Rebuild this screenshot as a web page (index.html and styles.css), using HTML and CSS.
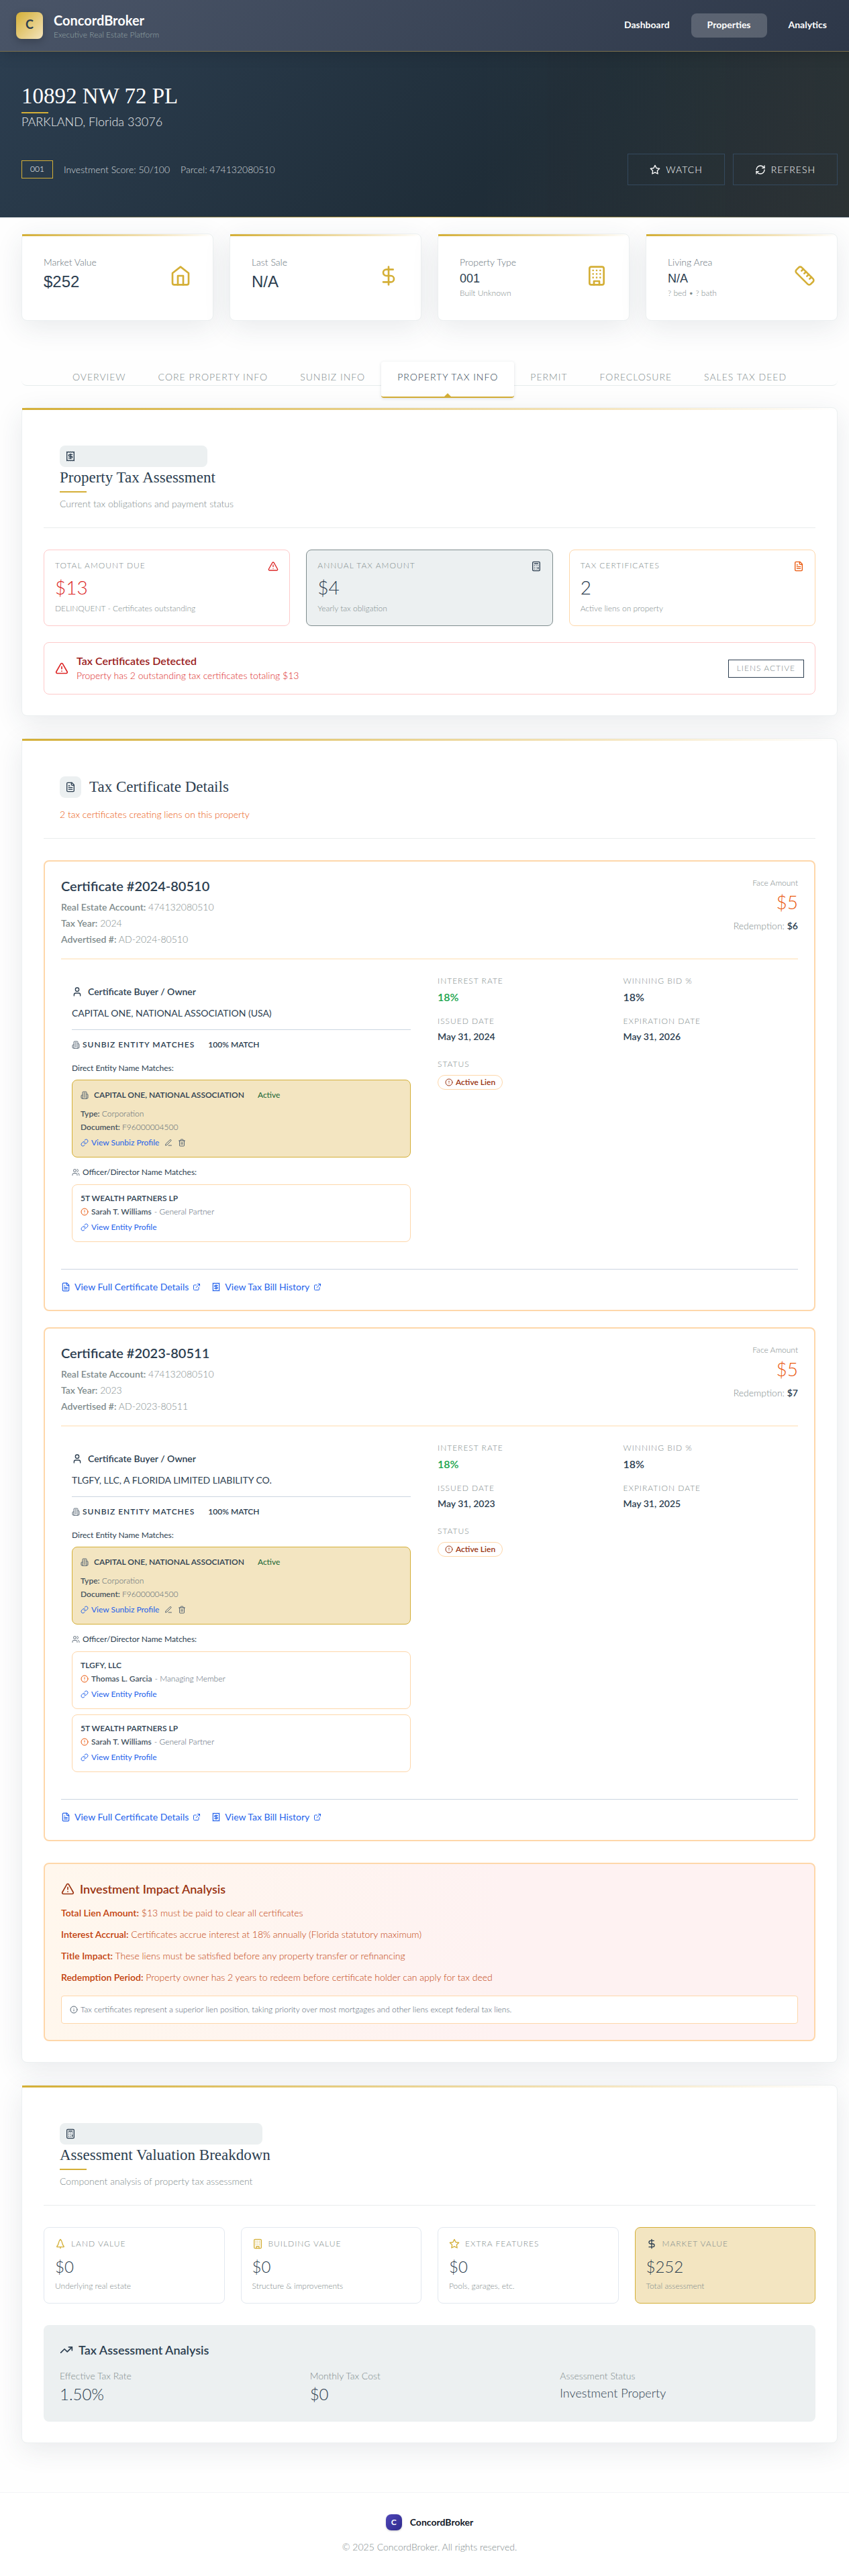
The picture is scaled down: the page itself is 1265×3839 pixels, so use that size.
FILE: index.html
```html
<!DOCTYPE html>
<html lang="en">
<head>
<meta charset="utf-8">
<meta name="viewport" content="width=device-width, initial-scale=1">
<title>10892 NW 72 PL - ConcordBroker</title>
<link rel="stylesheet" href="styles.css">
</head>
<body>
<svg class="sprite" aria-hidden="true">
  <symbol id="home" viewBox="0 0 24 24"><path d="m3 9 9-7 9 7v11a2 2 0 0 1-2 2H5a2 2 0 0 1-2-2z"/><path d="M9 22V12h6v10"/></symbol>
  <symbol id="dollar" viewBox="0 0 24 24"><path d="M12 2v20"/><path d="M17 5H9.5a3.5 3.5 0 0 0 0 7h5a3.5 3.5 0 0 1 0 7H6"/></symbol>
  <symbol id="building" viewBox="0 0 24 24"><rect x="4" y="2" width="16" height="20" rx="2"/><path d="M9 22v-4h6v4M8 6h.01M16 6h.01M12 6h.01M12 10h.01M12 14h.01M16 10h.01M16 14h.01M8 10h.01M8 14h.01"/></symbol>
  <symbol id="ruler" viewBox="0 0 24 24"><path d="M21.3 15.3a2.4 2.4 0 0 1 0 3.4l-2.6 2.6a2.4 2.4 0 0 1-3.4 0L2.7 8.7a2.41 2.41 0 0 1 0-3.4l2.6-2.6a2.41 2.41 0 0 1 3.4 0Z"/><path d="m14.5 12.5 2-2M11.5 9.5l2-2M8.5 6.5l2-2M17.5 15.5l2-2"/></symbol>
  <symbol id="star" viewBox="0 0 24 24"><path d="m12 2 3.09 6.26L22 9.27l-5 4.87 1.18 6.88L12 17.77l-6.18 3.25L7 14.14 2 9.27l6.91-1.01z"/></symbol>
  <symbol id="refresh" viewBox="0 0 24 24"><path d="M3 12a9 9 0 0 1 9-9 9.75 9.75 0 0 1 6.74 2.74L21 8"/><path d="M21 3v5h-5M21 12a9 9 0 0 1-9 9 9.75 9.75 0 0 1-6.74-2.74L3 16"/><path d="M8 16H3v5"/></symbol>
  <symbol id="receipt" viewBox="0 0 24 24"><path d="M4 2v20l2-1 2 1 2-1 2 1 2-1 2 1 2-1 2 1V2l-2 1-2-1-2 1-2-1-2 1-2-1-2 1Z"/><path d="M16 8h-6a2 2 0 1 0 0 4h4a2 2 0 1 1 0 4H8M12 17.5v-11"/></symbol>
  <symbol id="calc" viewBox="0 0 24 24"><rect x="4" y="2" width="16" height="20" rx="2"/><path d="M8 6h8M16 14v4M16 10h.01M12 10h.01M8 10h.01M12 14h.01M8 14h.01M12 18h.01M8 18h.01"/></symbol>
  <symbol id="file" viewBox="0 0 24 24"><path d="M15 2H6a2 2 0 0 0-2 2v16a2 2 0 0 0 2 2h12a2 2 0 0 0 2-2V7Z"/><path d="M14 2v4a2 2 0 0 0 2 2h4M10 9H8M16 13H8M16 17H8"/></symbol>
  <symbol id="warn" viewBox="0 0 24 24"><path d="m21.73 18-8-14a2 2 0 0 0-3.48 0l-8 14A2 2 0 0 0 4 21h16a2 2 0 0 0 1.73-3Z"/><path d="M12 9v4M12 17h.01"/></symbol>
  <symbol id="user" viewBox="0 0 24 24"><path d="M19 21v-2a4 4 0 0 0-4-4H9a4 4 0 0 0-4 4v2"/><circle cx="12" cy="7" r="4"/></symbol>
  <symbol id="users" viewBox="0 0 24 24"><path d="M16 21v-2a4 4 0 0 0-4-4H6a4 4 0 0 0-4 4v2"/><circle cx="9" cy="7" r="4"/><path d="M22 21v-2a4 4 0 0 0-3-3.87M16 3.13a4 4 0 0 1 0 7.75"/></symbol>
  <symbol id="office" viewBox="0 0 24 24"><path d="M6 22V4a2 2 0 0 1 2-2h8a2 2 0 0 1 2 2v18Z"/><path d="M6 12H4a2 2 0 0 0-2 2v6a2 2 0 0 0 2 2h2M18 9h2a2 2 0 0 1 2 2v9a2 2 0 0 1-2 2h-2M10 6h4M10 10h4M10 14h4M10 18h4"/></symbol>
  <symbol id="link" viewBox="0 0 24 24"><path d="M10 13a5 5 0 0 0 7.54.54l3-3a5 5 0 0 0-7.07-7.07l-1.72 1.71"/><path d="M14 11a5 5 0 0 0-7.54-.54l-3 3a5 5 0 0 0 7.07 7.07l1.71-1.71"/></symbol>
  <symbol id="pen" viewBox="0 0 24 24"><path d="M12 20h9M16.5 3.5a2.12 2.12 0 0 1 3 3L7 19l-4 1 1-4Z"/></symbol>
  <symbol id="trash" viewBox="0 0 24 24"><path d="M3 6h18M19 6v14a2 2 0 0 1-2 2H7a2 2 0 0 1-2-2V6M8 6V4a2 2 0 0 1 2-2h4a2 2 0 0 1 2 2v2M10 11v6M14 11v6"/></symbol>
  <symbol id="alert" viewBox="0 0 24 24"><circle cx="12" cy="12" r="10"/><path d="M12 8v4M12 16h.01"/></symbol>
  <symbol id="info" viewBox="0 0 24 24"><circle cx="12" cy="12" r="10"/><path d="M12 16v-4M12 8h.01"/></symbol>
  <symbol id="external" viewBox="0 0 24 24"><path d="M15 3h6v6M10 14 21 3M18 13v6a2 2 0 0 1-2 2H5a2 2 0 0 1-2-2V8a2 2 0 0 1 2-2h6"/></symbol>
  <symbol id="tree" viewBox="0 0 24 24"><path d="M12 2C9.5 4.500 8.500 7 8 10c-.5 3-1.500 5-3.500 7.200a1 1 0 0 0 .7 1.800h13.600a1 1 0 0 0 .7-1.800C17.500 15 16.500 13 16 10c-.5-3-1.500-5.500-4-8Z"/><path d="M12 22v-3"/></symbol>
  <symbol id="trend" viewBox="0 0 24 24"><path d="m22 7-8.5 8.5-5-5L2 17"/><path d="M16 7h6v6"/></symbol>
</svg>

<header class="topbar">
  <div class="brand">
    <span class="logo">C</span>
    <div>
      <div class="brand-name">ConcordBroker</div>
      <div class="brand-sub">Executive Real Estate Platform</div>
    </div>
  </div>
  <nav class="mainnav">
    <a href="#">Dashboard</a>
    <a href="#" class="current">Properties</a>
    <a href="#">Analytics</a>
  </nav>
</header>

<section class="hero">
  <h1>10892 NW 72 PL</h1>
  <p class="place">PARKLAND, Florida 33076</p>
  <div class="hero-row">
    <div class="hero-meta">
      <span class="tag tag-gold">001</span>
      <span>Investment Score: 50/100</span>
      <span>Parcel: 474132080510</span>
    </div>
    <div class="hero-actions">
      <button type="button"><svg class="i16"><use href="#star"/></svg>WATCH</button>
      <button type="button"><svg class="i16"><use href="#refresh"/></svg>REFRESH</button>
    </div>
  </div>
</section>

<main>
  <section class="facts">
    <article class="card fact">
      <div><p class="fact-label">Market Value</p><p class="fact-big">$252</p></div>
      <svg class="i32"><use href="#home"/></svg>
    </article>
    <article class="card fact">
      <div><p class="fact-label">Last Sale</p><p class="fact-big">N/A</p></div>
      <svg class="i32"><use href="#dollar"/></svg>
    </article>
    <article class="card fact">
      <div><p class="fact-label">Property Type</p><p class="fact-mid">001</p><p class="fact-note">Built Unknown</p></div>
      <svg class="i32"><use href="#building"/></svg>
    </article>
    <article class="card fact">
      <div><p class="fact-label">Living Area</p><p class="fact-mid">N/A</p><p class="fact-note">? bed • ? bath</p></div>
      <svg class="i32"><use href="#ruler"/></svg>
    </article>
  </section>

  <div class="tabs" role="tablist">
    <button type="button" role="tab">OVERVIEW</button>
    <button type="button" role="tab">CORE PROPERTY INFO</button>
    <button type="button" role="tab">SUNBIZ INFO</button>
    <button type="button" role="tab" aria-selected="true">PROPERTY TAX INFO</button>
    <button type="button" role="tab">PERMIT</button>
    <button type="button" role="tab">FORECLOSURE</button>
    <button type="button" role="tab">SALES TAX DEED</button>
  </div>

  <section class="card panel">
    <header class="panel-head">
      <h2 class="stacked"><span class="chip"><svg class="i16"><use href="#receipt"/></svg></span>Property Tax Assessment</h2>
      <p>Current tax obligations and payment status</p>
    </header>
    <div class="thirds">
      <article class="stat red">
        <div class="stat-top"><span>TOTAL AMOUNT DUE</span><svg class="i16"><use href="#warn"/></svg></div>
        <p class="stat-value">$13</p>
        <p class="stat-note">DELINQUENT - Certificates outstanding</p>
      </article>
      <article class="stat grey">
        <div class="stat-top"><span>ANNUAL TAX AMOUNT</span><svg class="i16"><use href="#calc"/></svg></div>
        <p class="stat-value">$4</p>
        <p class="stat-note">Yearly tax obligation</p>
      </article>
      <article class="stat orange">
        <div class="stat-top"><span>TAX CERTIFICATES</span><svg class="i16"><use href="#file"/></svg></div>
        <p class="stat-value">2</p>
        <p class="stat-note">Active liens on property</p>
      </article>
    </div>
    <div class="alert">
      <svg class="i20"><use href="#warn"/></svg>
      <div class="alert-text">
        <h3>Tax Certificates Detected</h3>
        <p>Property has 2 outstanding tax certificates totaling $13</p>
      </div>
      <span class="tag tag-navy">LIENS ACTIVE</span>
    </div>
  </section>

  <section class="card panel">
    <header class="panel-head warm">
      <h2 class="inline"><span class="chip"><svg class="i16"><use href="#file"/></svg></span>Tax Certificate Details</h2>
      <p>2 tax certificates creating liens on this property</p>
    </header>

    <div class="certs">
      <article class="cert">
        <div class="cert-head">
          <div>
            <h3>Certificate #2024-80510</h3>
            <p><strong>Real Estate Account:</strong> 474132080510</p>
            <p><strong>Tax Year:</strong> 2024</p>
            <p><strong>Advertised #:</strong> AD-2024-80510</p>
          </div>
          <div class="face">
            <p class="face-label">Face Amount</p>
            <p class="face-value">$5</p>
            <p class="face-redeem">Redemption: <strong>$6</strong></p>
          </div>
        </div>
        <div class="cert-body">
          <div class="buyer">
            <h4><svg class="i16"><use href="#user"/></svg>Certificate Buyer / Owner</h4>
            <p class="buyer-name">CAPITAL ONE, NATIONAL ASSOCIATION (USA)</p>
            <div class="match-head"><svg class="i12"><use href="#office"/></svg><span>SUNBIZ ENTITY MATCHES</span><span class="pct">100% MATCH</span></div>
            <p class="match-label">Direct Entity Name Matches:</p>
            <div class="entity gold">
              <div class="entity-name"><svg class="i12"><use href="#office"/></svg><strong>CAPITAL ONE, NATIONAL ASSOCIATION</strong><span class="active">Active</span></div>
              <p><strong>Type:</strong> Corporation</p>
              <p><strong>Document:</strong> F96000004500</p>
              <div class="entity-links"><a href="#"><svg class="i12"><use href="#link"/></svg>View Sunbiz Profile</a><button type="button" aria-label="Edit"><svg class="i12"><use href="#pen"/></svg></button><button type="button" aria-label="Delete"><svg class="i12"><use href="#trash"/></svg></button></div>
            </div>
            <p class="officer-label"><svg class="i12"><use href="#users"/></svg>Officer/Director Name Matches:</p>
            <div class="officers">
              <div class="entity">
                <p class="officer-entity">5T WEALTH PARTNERS LP</p>
                <p class="officer"><svg class="i12"><use href="#alert"/></svg><strong>Sarah T. Williams</strong> - General Partner</p>
                <div class="entity-links"><a href="#"><svg class="i12"><use href="#link"/></svg>View Entity Profile</a></div>
              </div>
            </div>
          </div>
          <dl class="terms">
            <div><dt>INTEREST RATE</dt><dd class="rate good">18%</dd></div>
            <div><dt>WINNING BID %</dt><dd class="rate">18%</dd></div>
            <div><dt>ISSUED DATE</dt><dd>May 31, 2024</dd></div>
            <div><dt>EXPIRATION DATE</dt><dd>May 31, 2026</dd></div>
            <div class="status"><dt>STATUS</dt><dd><span class="pill"><svg class="i12"><use href="#alert"/></svg>Active Lien</span></dd></div>
          </dl>
        </div>
        <div class="cert-foot">
          <a href="#"><svg class="i14"><use href="#file"/></svg>View Full Certificate Details<svg class="i12"><use href="#external"/></svg></a>
          <a href="#"><svg class="i14"><use href="#receipt"/></svg>View Tax Bill History<svg class="i12"><use href="#external"/></svg></a>
        </div>
      </article>

      <article class="cert">
        <div class="cert-head">
          <div>
            <h3>Certificate #2023-80511</h3>
            <p><strong>Real Estate Account:</strong> 474132080510</p>
            <p><strong>Tax Year:</strong> 2023</p>
            <p><strong>Advertised #:</strong> AD-2023-80511</p>
          </div>
          <div class="face">
            <p class="face-label">Face Amount</p>
            <p class="face-value">$5</p>
            <p class="face-redeem">Redemption: <strong>$7</strong></p>
          </div>
        </div>
        <div class="cert-body">
          <div class="buyer">
            <h4><svg class="i16"><use href="#user"/></svg>Certificate Buyer / Owner</h4>
            <p class="buyer-name">TLGFY, LLC, A FLORIDA LIMITED LIABILITY CO.</p>
            <div class="match-head"><svg class="i12"><use href="#office"/></svg><span>SUNBIZ ENTITY MATCHES</span><span class="pct">100% MATCH</span></div>
            <p class="match-label">Direct Entity Name Matches:</p>
            <div class="entity gold">
              <div class="entity-name"><svg class="i12"><use href="#office"/></svg><strong>CAPITAL ONE, NATIONAL ASSOCIATION</strong><span class="active">Active</span></div>
              <p><strong>Type:</strong> Corporation</p>
              <p><strong>Document:</strong> F96000004500</p>
              <div class="entity-links"><a href="#"><svg class="i12"><use href="#link"/></svg>View Sunbiz Profile</a><button type="button" aria-label="Edit"><svg class="i12"><use href="#pen"/></svg></button><button type="button" aria-label="Delete"><svg class="i12"><use href="#trash"/></svg></button></div>
            </div>
            <p class="officer-label"><svg class="i12"><use href="#users"/></svg>Officer/Director Name Matches:</p>
            <div class="officers">
              <div class="entity">
                <p class="officer-entity">TLGFY, LLC</p>
                <p class="officer"><svg class="i12"><use href="#alert"/></svg><strong>Thomas L. Garcia</strong> - Managing Member</p>
                <div class="entity-links"><a href="#"><svg class="i12"><use href="#link"/></svg>View Entity Profile</a></div>
              </div>
              <div class="entity">
                <p class="officer-entity">5T WEALTH PARTNERS LP</p>
                <p class="officer"><svg class="i12"><use href="#alert"/></svg><strong>Sarah T. Williams</strong> - General Partner</p>
                <div class="entity-links"><a href="#"><svg class="i12"><use href="#link"/></svg>View Entity Profile</a></div>
              </div>
            </div>
          </div>
          <dl class="terms">
            <div><dt>INTEREST RATE</dt><dd class="rate good">18%</dd></div>
            <div><dt>WINNING BID %</dt><dd class="rate">18%</dd></div>
            <div><dt>ISSUED DATE</dt><dd>May 31, 2023</dd></div>
            <div><dt>EXPIRATION DATE</dt><dd>May 31, 2025</dd></div>
            <div class="status"><dt>STATUS</dt><dd><span class="pill"><svg class="i12"><use href="#alert"/></svg>Active Lien</span></dd></div>
          </dl>
        </div>
        <div class="cert-foot">
          <a href="#"><svg class="i14"><use href="#file"/></svg>View Full Certificate Details<svg class="i12"><use href="#external"/></svg></a>
          <a href="#"><svg class="i14"><use href="#receipt"/></svg>View Tax Bill History<svg class="i12"><use href="#external"/></svg></a>
        </div>
      </article>
    </div>

    <div class="impact">
      <h3><svg class="i20"><use href="#warn"/></svg>Investment Impact Analysis</h3>
      <p><strong>Total Lien Amount:</strong> $13 must be paid to clear all certificates</p>
      <p><strong>Interest Accrual:</strong> Certificates accrue interest at 18% annually (Florida statutory maximum)</p>
      <p><strong>Title Impact:</strong> These liens must be satisfied before any property transfer or refinancing</p>
      <p><strong>Redemption Period:</strong> Property owner has 2 years to redeem before certificate holder can apply for tax deed</p>
      <div class="impact-note"><svg class="i12"><use href="#info"/></svg>Tax certificates represent a superior lien position, taking priority over most mortgages and other liens except federal tax liens.</div>
    </div>
  </section>

  <section class="card panel">
    <header class="panel-head">
      <h2 class="stacked"><span class="chip"><svg class="i16"><use href="#calc"/></svg></span>Assessment Valuation Breakdown</h2>
      <p>Component analysis of property tax assessment</p>
    </header>
    <div class="quarters">
      <article class="stat value">
        <div class="value-top"><svg class="i16"><use href="#tree"/></svg>LAND VALUE</div>
        <p class="value-num">$0</p>
        <p class="stat-note">Underlying real estate</p>
      </article>
      <article class="stat value">
        <div class="value-top"><svg class="i16"><use href="#building"/></svg>BUILDING VALUE</div>
        <p class="value-num">$0</p>
        <p class="stat-note">Structure &amp; improvements</p>
      </article>
      <article class="stat value">
        <div class="value-top"><svg class="i16"><use href="#star"/></svg>EXTRA FEATURES</div>
        <p class="value-num">$0</p>
        <p class="stat-note">Pools, garages, etc.</p>
      </article>
      <article class="stat value total">
        <div class="value-top"><svg class="i16"><use href="#dollar"/></svg>MARKET VALUE</div>
        <p class="value-num">$252</p>
        <p class="stat-note">Total assessment</p>
      </article>
    </div>
    <div class="analysis">
      <h3><svg class="i20"><use href="#trend"/></svg>Tax Assessment Analysis</h3>
      <dl>
        <div><dt>Effective Tax Rate</dt><dd>1.50%</dd></div>
        <div><dt>Monthly Tax Cost</dt><dd>$0</dd></div>
        <div><dt>Assessment Status</dt><dd class="word">Investment Property</dd></div>
      </dl>
    </div>
  </section>
</main>

<footer class="foot">
  <div class="foot-brand"><span class="foot-logo">C</span>ConcordBroker</div>
  <p>© 2025 ConcordBroker. All rights reserved.</p>
</footer>
</body>
</html>
```
FILE: styles.css
```css
:root {
  --navy: #2c3e50;
  --gold: #d4af37;
  --gold-soft: #f3e5c1;
  --grey: #7f8c8d;
  --mist: #ecf0f1;
  --peach: #fed7aa;
  --blue: #2563eb;
  --serif: "Liberation Serif", "Times New Roman", serif;
  --sans: Lato, "Open Sans", sans-serif;
}

* { box-sizing: border-box; }

html { overflow-x: hidden; }

body {
  margin: 0 -15px 0 0;
  background: #fefefe;
  color: var(--navy);
  font: 300 14px/22px var(--sans);
}

h1, h2, h3, h4, p, dl, dd { margin: 0; }
strong { font-weight: 600; }
a { color: inherit; text-decoration: none; }
button { font: inherit; color: inherit; background: none; border: 0; padding: 0; cursor: pointer; }

.sprite { display: none; }
svg { fill: none; stroke: currentColor; stroke-width: 2; stroke-linecap: round; stroke-linejoin: round; flex: none; }
.i12 { width: 12px; height: 12px; }
.i14 { width: 14px; height: 14px; }
.i16 { width: 16px; height: 16px; }
.i20 { width: 20px; height: 20px; }
.i32 { width: 32px; height: 32px; color: var(--gold); }

/* Top bar */
.topbar {
  position: relative;
  display: flex;
  align-items: center;
  justify-content: space-between;
  height: 77px;
  padding: 0 24px;
  background: linear-gradient(135deg, #4a5568, #2d3748);
  border-bottom: 1px solid #7a6f4c;
  box-shadow: 0 4px 20px rgba(0, 0, 0, .15);
  color: #fff;
}
.brand { display: flex; align-items: center; gap: 16px; }
.logo {
  width: 40px;
  height: 40px;
  border-radius: 8px;
  background: linear-gradient(135deg, var(--gold), #f4e4bc);
  box-shadow: 0 4px 12px rgba(0, 0, 0, .2);
  color: var(--navy);
  font-size: 18px;
  font-weight: 700;
  line-height: 36px;
  text-align: center;
}
.brand-name { font-size: 20px; font-weight: 700; line-height: 28px; }
.brand-sub { color: #95a5a6; font-size: 12px; line-height: 16px; }
.mainnav { display: flex; gap: 8px; }
.mainnav a { padding: 6px 24px 8px; border-radius: 8px; font-weight: 700; }
.mainnav .current { background: rgba(255, 255, 255, .2); }

/* Hero */
.hero {
  padding: 48px 32px 47px;
  border-bottom: 1px solid;
  border-image: linear-gradient(90deg, #2c3e50, var(--gold) 50%, #2c3e50) 1;
  background: linear-gradient(90deg, transparent 55%, rgba(212, 175, 55, .05)), linear-gradient(135deg, #2c3e50, #1f2d38 60%, #232b33);
  color: #fff;
}
.hero h1 { position: relative; margin-bottom: 6px; font: 400 33px/36px var(--serif); }
.hero h1::after { content: ""; position: absolute; left: 0; bottom: -8px; width: 40px; height: 2px; background: var(--gold); }
.place { font-size: 18px; line-height: 28px; opacity: .9; }
.hero-row { display: flex; align-items: center; justify-content: space-between; margin-top: 34px; }
.hero-meta { display: flex; align-items: center; gap: 16px; color: #d3d8dc; }
.hero-actions { display: flex; gap: 12px; }
.hero-actions button {
  display: flex;
  align-items: center;
  gap: 8px;
  height: 47px;
  padding: 0 32px;
  border: 1px solid #34495e;
  letter-spacing: 1px;
}
.tag { height: 27px; padding: 0 12px; border: 1px solid; font-size: 12px; line-height: 23px; }
.tag-gold { border-color: var(--gold); color: #fff; }
.tag-navy { border-color: var(--navy); color: var(--grey); letter-spacing: 1px; }

main { padding: 24px 32px 0; }

/* Cards */
.card {
  position: relative;
  border: 1px solid var(--mist);
  border-radius: 8px;
  background: #fff;
  box-shadow: 0 10px 40px rgba(44, 62, 80, .1);
}
.card::before {
  content: "";
  position: absolute;
  inset: 0 0 auto;
  height: 3px;
  background: linear-gradient(90deg, var(--gold), #f4e4bc 70%, transparent);
}
.facts { display: grid; grid-template-columns: repeat(4, 1fr); gap: 24px; }
.fact { display: flex; align-items: flex-start; justify-content: space-between; min-height: 130px; padding: 32px; }
.fact svg { margin-top: 14px; }
.fact-label { line-height: 20px; color: #68747c; }
.fact-big { font: 400 24px/38px "Liberation Sans", Arial, sans-serif; }
.fact-mid { font: 400 18px/28px "Liberation Sans", Arial, sans-serif; }
.fact-note { color: var(--grey); font-size: 12px; line-height: 16px; }

/* Tabs */
.tabs {
  display: flex;
  justify-content: center;
  align-items: flex-start;
  height: 40px;
  margin-top: 57px;
  padding-top: 4px;
  border-bottom: 1px solid #e6ecec;
  border-radius: 8px;
}
.tabs button {
  position: relative;
  flex: none;
  height: 54px;
  padding: 0 24px 6px;
  border-bottom: 2px solid transparent;
  color: var(--grey);
  letter-spacing: 1px;
}
.tabs [aria-selected] {
  border-bottom-color: var(--gold);
  border-radius: 4px;
  background: #fff;
  box-shadow: 0 1px 4px rgba(44, 62, 80, .15);
  color: var(--navy);
}
.tabs [aria-selected]::after {
  content: "";
  position: absolute;
  left: 50%;
  bottom: 0;
  margin-left: -5px;
  border: 5px solid transparent;
  border-top: 0;
  border-bottom-color: var(--gold);
}

/* Panels */
.panel { margin-top: 32px; padding: 32px 32px 31px; }
.panel + .panel { margin-top: 33px; }
.panel-head { margin-bottom: 32px; padding: 24px; border-bottom: 1px solid #e9eced; color: var(--grey); }
.panel-head h2 { color: var(--navy); font: 400 23px/32px var(--serif); }
.panel-head p { margin-top: 12px; }
.stacked { position: relative; width: max-content; }
.stacked::after { content: ""; position: absolute; left: 0; bottom: -6px; width: 40px; height: 2px; background: var(--gold); }
.chip { display: flex; align-items: center; height: 32px; margin-right: 12px; padding: 8px; border-radius: 8px; background: var(--mist); }
.inline { display: flex; padding-bottom: 2px; }
.warm p { color: #ea580c; }

.thirds { display: grid; grid-template-columns: repeat(3, 1fr); gap: 24px; }
.quarters { display: grid; grid-template-columns: repeat(4, 1fr); gap: 24px; }
.stat { padding: 16px; border: 1px solid #e2e8f0; border-radius: 8px; }
.stat-top { display: flex; justify-content: space-between; color: var(--grey); font-size: 12px; line-height: 14px; letter-spacing: 1px; }
.stat-value { font-size: 28px; line-height: 46px; }
.stat-note { color: var(--grey); font-size: 12px; line-height: 18px; }
.red { border-color: #fecaca; }
.red svg, .red .stat-value { color: #dc2626; }
.grey { border-color: var(--grey); background: var(--mist); }
.grey svg { color: var(--navy); }
.orange { border-color: var(--peach); }
.orange svg { color: #ea580c; }

.alert { display: flex; align-items: center; gap: 12px; margin-top: 24px; padding: 16px; border: 1px solid #fecaca; border-radius: 8px; color: #dc2626; }
.alert-text { flex: 1; }
.alert h3 { color: #991b1b; font-size: 16px; font-weight: 600; line-height: 22px; }

/* Certificates */
.certs { display: grid; gap: 24px; }
.cert { padding: 24px; border: 2px solid var(--peach); border-radius: 8px; }
.cert-head { display: flex; justify-content: space-between; padding-bottom: 16px; border-bottom: 2px solid #ffedd5; color: var(--grey); line-height: 24px; }
.cert-head h3 { margin-bottom: 8px; color: var(--navy); font-size: 20px; font-weight: 600; line-height: 24px; }
.face { text-align: right; }
.face strong { color: var(--navy); }
.face-label { font-size: 12px; line-height: 16px; }
.face-value { margin-bottom: 4px; color: #ea580c; font-size: 28px; line-height: 40px; }
.cert-body { display: grid; grid-template-columns: 1fr 1fr; gap: 24px; padding: 24px 0; }
.buyer { padding: 16px; font-size: 12px; }
.buyer h4 { display: flex; align-items: center; gap: 8px; margin-bottom: 12px; font-size: 14px; font-weight: 600; line-height: 16px; }
.buyer-name { padding-bottom: 12px; border-bottom: 1px solid #cbd5e1; font-size: 14px; font-weight: 400; line-height: 24px; }
.match-head { display: flex; align-items: center; gap: 4px; margin: 12px 0 16px; font-weight: 600; line-height: 20px; letter-spacing: 1px; }
.match-head svg, .officer-label svg { opacity: .75; }
.pct { margin-left: 16px; letter-spacing: 0; }
.match-label { margin-bottom: 8px; font-weight: 400; line-height: 18px; }
.officer-label { display: flex; align-items: center; gap: 4px; margin: 12px 0 8px; font-weight: 400; line-height: 20px; }
.officers { display: grid; gap: 8px; }
.entity { padding: 12px; border: 1px solid var(--peach); border-radius: 8px; color: #566573; line-height: 20px; }
.entity strong { color: #46545f; }
.gold { border-color: var(--gold); background: var(--gold-soft); }
.entity-name { display: flex; align-items: center; gap: 8px; margin-bottom: 8px; }
.entity-name strong { color: var(--navy); }
.active { margin-left: 12px; color: #166534; font-weight: 400; }
.entity-links { display: flex; align-items: center; gap: 8px; margin-top: 4px; line-height: 18px; }
.entity-links a { display: flex; align-items: center; gap: 4px; color: var(--blue); font-weight: 400; }
.entity-links button { display: flex; }
.officer-entity { margin-bottom: 2px; color: var(--navy); font-weight: 600; line-height: 16px; }
.officer { display: flex; align-items: center; gap: 4px; }
.officer svg { color: #ea580c; }

.terms { display: grid; grid-template-columns: 1fr 1fr; gap: 16px; align-content: start; }
.terms > div { min-height: 44px; }
.terms dt { margin-bottom: 4px; color: var(--grey); font-size: 12px; line-height: 16px; letter-spacing: 1px; }
.terms dd { font-weight: 600; }
.terms .rate { font-size: 16px; line-height: 24px; }
.terms .good { color: #16a34a; }
.terms .status { margin-top: 4px; }
.status dd { margin-top: 8px; }
.pill { display: inline-flex; align-items: center; gap: 4px; padding: 0 10px; border: 1px solid var(--peach); border-radius: 11px; color: #9a3412; font-size: 12px; line-height: 20px; }

.cert-foot { display: flex; gap: 16px; padding-top: 16px; border-top: 1px solid #cbd5e1; color: var(--blue); font-weight: 400; line-height: 20px; }
.cert-foot a { display: flex; align-items: center; gap: 6px; }

/* Impact */
.impact { margin-top: 32px; padding: 24px; border: 2px solid var(--peach); border-radius: 8px; background: linear-gradient(90deg, #fff7ed, #fef2f2 60%); color: #c2410c; }
.impact h3, .analysis h3 { display: flex; align-items: center; gap: 8px; font-size: 18px; font-weight: 600; line-height: 26px; }
.impact h3 { margin-bottom: 12px; color: #9a3412; }
.impact p { margin-bottom: 10px; }
.impact-note { display: flex; align-items: center; gap: 4px; height: 42px; margin-top: 16px; padding: 0 12px; border: 1px solid var(--peach); border-radius: 4px; background: #fff; color: #566573; font-size: 12px; }

/* Valuation */
.value-top { display: flex; align-items: center; gap: 8px; margin-bottom: 6px; color: var(--grey); font-size: 12px; line-height: 16px; letter-spacing: 1px; }
.value-top svg { color: var(--gold); }
.value-num { font-size: 24px; line-height: 40px; }
.total { border-color: var(--gold); background: var(--gold-soft); }
.total svg { color: var(--navy); }
.analysis { margin-top: 32px; padding: 24px; border-radius: 8px; background: var(--mist); }
.analysis dl { display: grid; grid-template-columns: repeat(3, 1fr); gap: 16px; margin-top: 16px; }
.analysis dt { color: var(--grey); line-height: 20px; }
.analysis dd { font-size: 24px; line-height: 34px; }
.analysis .word { font-size: 18px; line-height: 30px; }

/* Footer */
.foot { margin-top: 73px; padding: 32px 24px; border-top: 1px solid #f3f4f6; background: #fff; text-align: center; color: var(--grey); }
.foot-brand { display: flex; align-items: center; justify-content: center; gap: 12px; margin-bottom: 14px; color: #111827; font-weight: 700; line-height: 24px; }
.foot-logo { width: 24px; height: 24px; border-radius: 8px; background: linear-gradient(135deg, #4f46b8, #2e2a8c); box-shadow: 0 1px 3px rgba(0, 0, 0, .2); color: #fff; font-size: 12px; }
```
